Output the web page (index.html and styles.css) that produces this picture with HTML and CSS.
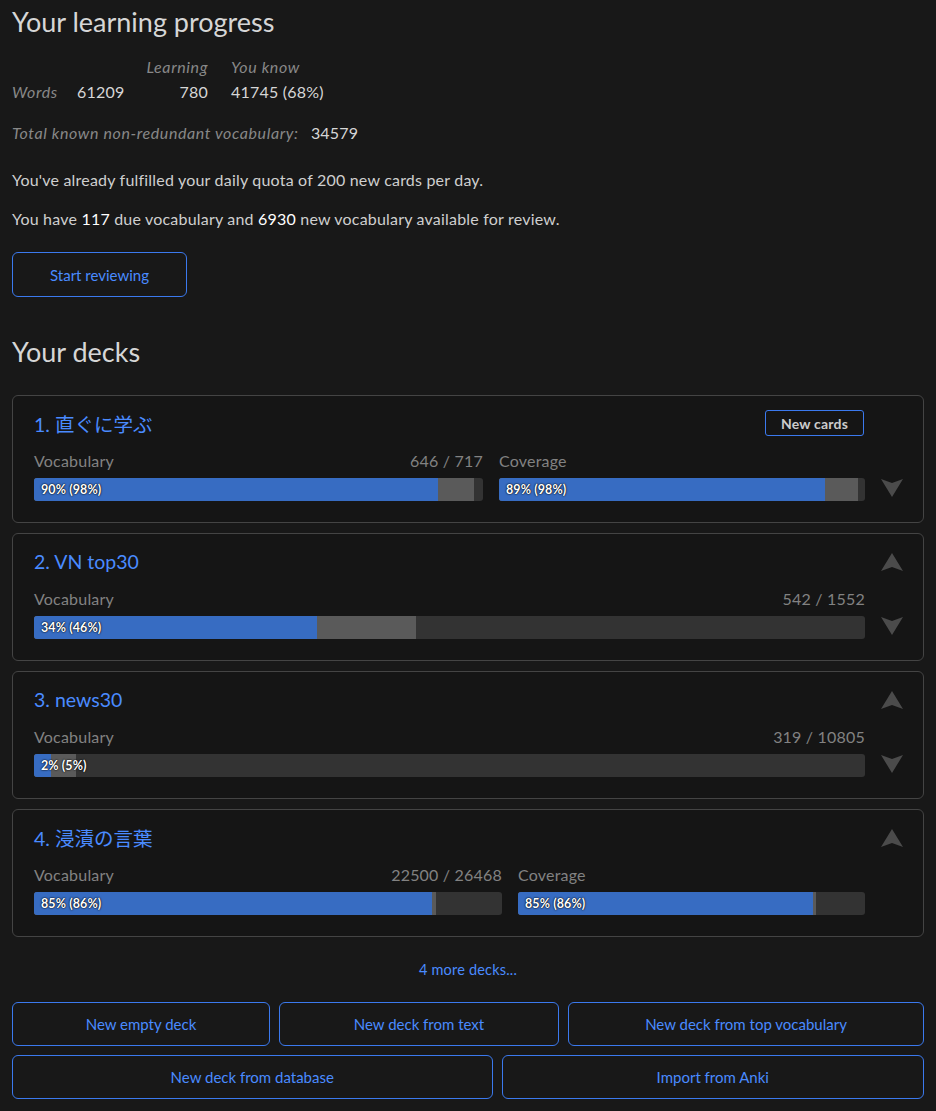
FILE: index.html
```html
<!DOCTYPE html>
<html>
<head>
<meta charset="utf-8">
<link rel="stylesheet" href="styles.css">
</head>
<body>
<div class="page">
  <h1 class="h1">Your learning progress</h1>
  <table class="stats">
    <tr><th class="c1"></th><th class="c2"></th><th class="c3">Learning</th><th class="c4">You know</th></tr>
    <tr><th class="c1">Words</th><td class="c2">61209</td><td class="c3">780</td><td class="c4">41745 (68%)</td></tr>
  </table>
  <p class="total"><span class="lbl">Total known non-redundant vocabulary:</span> <span class="val">34579</span></p>
  <p class="para first">You've already fulfilled your daily quota of 200 new cards per day.</p>
  <p class="para">You have <b>117</b> due vocabulary and <b>6930</b> new vocabulary available for review.</p>
  <div class="startrow"><a class="btn start">Start reviewing</a></div>

  <h1 class="h1 decks-h">Your decks</h1>

  <div class="decks">
    <div class="deck">
      <div class="deck-main">
        <div class="deck-top">
          <a class="deck-title">1. 直ぐに学ぶ</a>
          <a class="newcards">New cards</a>
        </div>
        <div class="cols">
          <div class="col" style="flex-grow:449">
            <div class="lblrow"><span>Vocabulary</span><span>646 / 717</span></div>
            <div class="bar"><div class="fill2" style="width:98%"></div><div class="fill" style="width:90%"></div><span class="bt">90% (98%)</span></div>
          </div>
          <div class="col" style="flex-grow:366">
            <div class="lblrow"><span>Coverage</span></div>
            <div class="bar"><div class="fill2" style="width:98%"></div><div class="fill" style="width:89%"></div><span class="bt">89% (98%)</span></div>
          </div>
        </div>
      </div>
      <div class="arrows">
        <span class="arr"></span>
        <svg class="arr" viewBox="0 0 22 18"><path d="M0 0 L11 4 L22 0 L11 18 Z"/></svg>
      </div>
    </div>

    <div class="deck">
      <div class="deck-main">
        <div class="deck-top"><a class="deck-title">2. VN top30</a></div>
        <div class="cols">
          <div class="col">
            <div class="lblrow"><span>Vocabulary</span><span>542 / 1552</span></div>
            <div class="bar"><div class="fill2" style="width:46%"></div><div class="fill" style="width:34%"></div><span class="bt">34% (46%)</span></div>
          </div>
        </div>
      </div>
      <div class="arrows">
        <svg class="arr" viewBox="0 0 22 18"><path d="M0 18 L11 14 L22 18 L11 0 Z"/></svg>
        <svg class="arr" viewBox="0 0 22 18"><path d="M0 0 L11 4 L22 0 L11 18 Z"/></svg>
      </div>
    </div>

    <div class="deck">
      <div class="deck-main">
        <div class="deck-top"><a class="deck-title">3. news30</a></div>
        <div class="cols">
          <div class="col">
            <div class="lblrow"><span>Vocabulary</span><span>319 / 10805</span></div>
            <div class="bar"><div class="fill2" style="width:5%"></div><div class="fill" style="width:2%"></div><span class="bt">2% (5%)</span></div>
          </div>
        </div>
      </div>
      <div class="arrows">
        <svg class="arr" viewBox="0 0 22 18"><path d="M0 18 L11 14 L22 18 L11 0 Z"/></svg>
        <svg class="arr" viewBox="0 0 22 18"><path d="M0 0 L11 4 L22 0 L11 18 Z"/></svg>
      </div>
    </div>

    <div class="deck">
      <div class="deck-main">
        <div class="deck-top"><a class="deck-title">4. 浸漬の言葉</a></div>
        <div class="cols">
          <div class="col" style="flex-grow:468">
            <div class="lblrow"><span>Vocabulary</span><span>22500 / 26468</span></div>
            <div class="bar"><div class="fill2" style="width:86%"></div><div class="fill" style="width:85%"></div><span class="bt">85% (86%)</span></div>
          </div>
          <div class="col" style="flex-grow:347">
            <div class="lblrow"><span>Coverage</span></div>
            <div class="bar"><div class="fill2" style="width:86%"></div><div class="fill" style="width:85%"></div><span class="bt">85% (86%)</span></div>
          </div>
        </div>
      </div>
      <div class="arrows">
        <svg class="arr" viewBox="0 0 22 18"><path d="M0 18 L11 14 L22 18 L11 0 Z"/></svg>
        <span class="arr"></span>
      </div>
    </div>
  </div>

  <div class="more"><a>4 more decks...</a></div>

  <div class="actions">
    <a class="btn act" style="flex-basis:240px">New empty deck</a>
    <a class="btn act" style="flex-basis:262px">New deck from text</a>
    <a class="btn act" style="flex-basis:338px">New deck from top vocabulary</a>
    <a class="btn act" style="flex-basis:460px">New deck from database</a>
    <a class="btn act" style="flex-basis:402px">Import from Anki</a>
  </div>
</div>
</body>
</html>
```
FILE: styles.css
```css
html, body { margin: 0; padding: 0; background: #181818; }
body {
  font-family: Lato, "Noto Sans", "Noto Sans CJK JP", sans-serif;
  color: #cfcfcf;
  font-size: 16px;
  letter-spacing: 0.2px;
}
.page { padding: 0 12px 12px 12px; }
.h1 {
  font-weight: 400;
  font-size: 27px;
  color: #d6d6d6;
  margin: 0;
  padding-top: 5px;
  line-height: 34px;
  letter-spacing: 0;
}
.stats { border-collapse: collapse; margin-top: 15px; }
.stats th, .stats td { padding: 0; line-height: 25px; text-align: left; }
.stats th { font-style: italic; font-weight: 400; color: #888; letter-spacing: 0.6px; }
.stats td { color: #d6d6d6; }
.stats .c1 { width: 65px; }
.stats .c2 { width: 60px; }
.stats .c3 { width: 71px; text-align: right; }
.stats .c4 { padding-left: 23px; }
.total { margin: 17px 0 0 0; line-height: 24px; }
.total .lbl { font-style: italic; color: #888; letter-spacing: 0.6px; }
.total .val { color: #d6d6d6; margin-left: 8px; }
.para { margin: 15px 0 0 0; line-height: 24px; }
.para.first { margin-top: 23px; }
.para b { font-weight: 400; color: #fff; }
.startrow { margin-top: 21px; }
.btn {
  display: inline-flex;
  align-items: center;
  justify-content: center;
  border: 1px solid #3b79ee;
  border-radius: 6px;
  color: #4a8bff;
  box-sizing: border-box;
  cursor: pointer;
  letter-spacing: 0;
}
.start { width: 175px; height: 45px; font-size: 15px; }
.decks-h { margin-top: 33px; }
.decks { margin-top: 26px; display: flex; flex-direction: column; gap: 10px; }
.deck {
  display: flex;
  border: 1px solid #444;
  border-radius: 6px;
  background: #151515;
  height: 128px;
  box-sizing: border-box;
}
.deck-main { flex: 1; padding: 13px 0 0 21px; min-width: 0; }
.deck-top { display: flex; justify-content: space-between; align-items: center; height: 28px; }
.deck-title {
  color: #4a8bff;
  font-size: 19.5px;
  letter-spacing: 0;
  font-family: Lato, "Noto Sans CJK JP", sans-serif;
}
.newcards {
  border: 1px solid #3b79ee;
  border-radius: 3px;
  color: #ccc;
  font-size: 14px;
  font-weight: 700;
  height: 26px;
  box-sizing: border-box;
  padding: 0 15px;
  display: inline-flex;
  align-items: center;
  margin-right: 1px;
  letter-spacing: 0.2px;
}
.cols { display: flex; gap: 16px; margin-top: 14px; }
.col { flex: 1 1 0; min-width: 0; }
.lblrow { display: flex; justify-content: space-between; color: #828282; line-height: 20px; }
.bar {
  margin-top: 7px;
  height: 23px;
  background: #333;
  border-radius: 3px;
  position: relative;
  overflow: hidden;
}
.fill, .fill2 { position: absolute; left: 0; top: 0; bottom: 0; }
.fill { background: #376cc2; }
.fill2 { background: #5a5a5a; }
.bt {
  position: absolute;
  left: 7px; top: 0;
  line-height: 23px;
  font-size: 12.5px;
  font-weight: 700;
  color: #fff;
  letter-spacing: 0.1px;
  text-shadow: 0 0 2px #000, 0 0 1px #000;
}
.arrows {
  width: 58px;
  flex: none;
  display: flex;
  flex-direction: column;
  align-items: center;
  padding: 19px 4px 0 0;
  box-sizing: border-box;
}
.arr { width: 22px; height: 18px; display: block; fill: #4b4b4b; }
.arrows .arr + .arr { margin-top: 46px; }
.more { text-align: center; margin-top: 21px; line-height: 22px; }
.more a { color: #4a8bff; font-size: 14.5px; }
.actions { display: flex; flex-wrap: wrap; gap: 9px; margin-top: 21px; }
.act { flex-grow: 1; height: 44px; font-size: 15px; }
```
